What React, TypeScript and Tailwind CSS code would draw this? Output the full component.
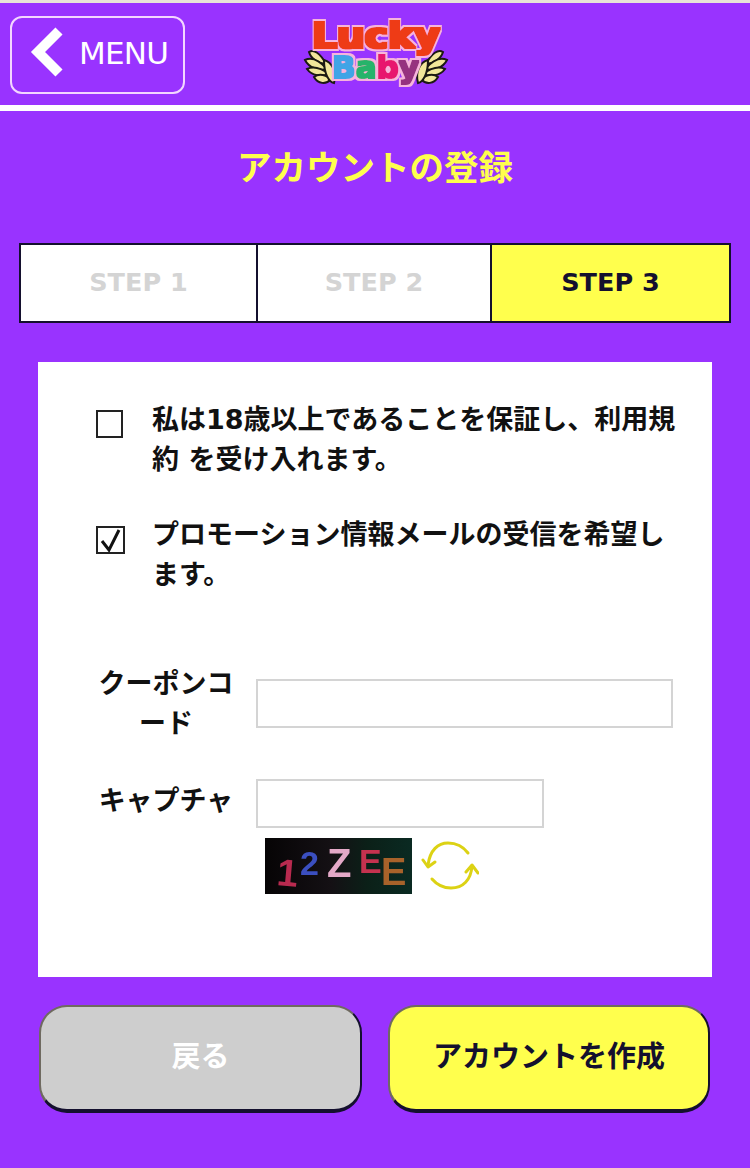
import React from 'react'

const jp = "font-['DejaVu_Sans','Noto_Sans_CJK_JP',sans-serif]"

const steps = [
  { label: 'STEP 1', active: false },
  { label: 'STEP 2', active: false },
  { label: 'STEP 3', active: true },
]

function Wing({ x, flip }: { x: number; flip?: boolean }) {
  return (
    <g transform={flip ? `translate(${x + 34} 34) scale(-1 1)` : `translate(${x} 34)`} fill="#f2e79a" stroke="#1c1a12" strokeWidth="2">
      <path d="M5 2 C10 -1 16 3 22 14 C15 14 7 9 5 2 Z" />
      <path d="M1 10 C7 7 15 10 23 19 C15 21 5 18 1 10 Z" />
      <path d="M3 19 C9 16 17 18 25 24 C17 27 8 26 3 19 Z" />
      <path d="M10 27 C14 24 20 24 27 29 C22 35 14 34 10 27 Z" />
      <path d="M20 10 C28 12 33 22 30 33 C25 32 20 24 20 10 Z" />
    </g>
  )
}

function Logo() {
  return (
    <svg width="146" height="74" viewBox="0 0 146 74">
      <defs>
        <filter id="fat" x="-10%" y="-20%" width="120%" height="140%">
          <feMorphology in="SourceGraphic" operator="dilate" radius="1.4" result="body" />
          <feMorphology in="SourceAlpha" operator="dilate" radius="2.6" result="edge" />
          <feFlood floodColor="#f7b4dc" />
          <feComposite in2="edge" operator="in" result="halo" />
          <feMerge>
            <feMergeNode in="halo" />
            <feMergeNode in="body" />
          </feMerge>
        </filter>
      </defs>
      <Wing x={1} />
      <Wing x={111} flip />
      <g fontFamily="'DejaVu Sans', sans-serif" fontWeight="700">
        <text transform="translate(9 32) scale(1.12 1)" fontSize="35" fill="#ee3a12" filter="url(#fat)">Lucky</text>
        <text x="29" y="62" fontSize="31" filter="url(#fat)">
          <tspan fill="#3fa4e6">B</tspan>
          <tspan fill="#27b36a">a</tspan>
          <tspan fill="#e8186e">b</tspan>
          <tspan fill="#96307f">y</tspan>
        </text>
      </g>
    </svg>
  )
}

function Captcha() {
  return (
    <svg width="147" height="56" viewBox="0 0 147 56">
      <defs>
        <linearGradient id="capbg" x1="0" x2="1" y1="0" y2="0">
          <stop offset="0" stopColor="#060405" />
          <stop offset="0.45" stopColor="#141014" />
          <stop offset="0.7" stopColor="#0b2018" />
          <stop offset="1" stopColor="#0a2a22" />
        </linearGradient>
        <filter id="soft">
          <feGaussianBlur stdDeviation="0.6" />
        </filter>
      </defs>
      <rect width="147" height="56" fill="url(#capbg)" />
      <g fontFamily="'Liberation Sans', sans-serif" filter="url(#soft)">
        <text x="11" y="47" fontSize="38" fill="#b92a50" transform="rotate(5 11 47)">1</text>
        <text x="35" y="37" fontSize="34" fill="#3a4fc0">2</text>
        <text x="62" y="39" fontSize="40" fill="#e4a9c8">Z</text>
        <text x="94" y="35" fontSize="34" fill="#c53350">E</text>
        <text x="116" y="47" fontSize="38" fill="#a8622c">E</text>
      </g>
    </svg>
  )
}

function RefreshIcon() {
  return (
    <svg width="58" height="50" viewBox="0 0 58 50" fill="none" stroke="#dcd214" strokeWidth="3" strokeLinecap="round" strokeLinejoin="round">
      <path d="M47 12 C41 4 34 2 27 2 C17 2 9 9 7 24" />
      <path d="M2 19 L7 26 L14 21" />
      <path d="M11 38 C17 45 23 47 30 47 C42 47 50 39 51 25" />
      <path d="M45 31 L51 24 L57 32" />
    </svg>
  )
}

export default function App() {
  return (
    <div className={`${jp} w-[750px] h-[1168px] bg-[#9933ff] border-t-[3px] border-[#e8e4d8] overflow-hidden`}>
      <header className="h-[102px] flex items-start relative">
        <button className="mt-[13px] ml-[10px] w-[175px] h-[78px] border-2 border-[#f3d6ff] rounded-[12px] flex items-center pl-[17px] gap-[16px] text-white">
          <svg width="34" height="50" viewBox="0 0 34 50" fill="none" stroke="white" strokeWidth="10" strokeLinejoin="miter" className="-mt-[6px]">
            <path d="M30 4 L9 25 L30 46" />
          </svg>
          <span className="text-[31px] font-normal tracking-[-0.75px] leading-none -mt-[4px]">MENU</span>
        </button>
        <div className="absolute left-[303px] top-[13px]">
          <Logo />
        </div>
      </header>
      <div className="h-[6px] bg-white"></div>

      <h1 className="mt-[33px] text-center text-[34.5px] leading-[48px] font-bold text-[#ffff4d]">アカウントの登録</h1>

      <div className="mt-[51px] mx-[19px] h-[80px] border-2 border-[#14102e] grid grid-cols-[235px_234px_1fr] bg-white">
        {steps.map((step, index) => (
          <div
            key={step.label}
            className={`flex items-center justify-center pb-[2px] text-[25.5px] font-bold ${index > 0 ? 'border-l-2 border-[#14102e]' : ''} ${step.active ? 'bg-[#ffff4d] text-[#14102e]' : 'text-[#d4d4d4]'}`}
          >
            {step.label}
          </div>
        ))}
      </div>

      <main className="mt-[39px] mx-[38px] h-[615px] bg-white pt-[38px] text-[#111] font-bold">
        <div className="flex pl-[58px] pr-[36px]">
          <span className="mt-[10px] w-[27px] h-[28px] border-2 border-[#222] shrink-0"></span>
          <p className="ml-[29px] text-[27px] leading-[40px]">私は18歳以上であることを保証し、利用規約 を受け入れます。</p>
        </div>
        <div className="flex pl-[58px] pr-[36px] mt-[35px]">
          <span className="mt-[11px] w-[29px] h-[28px] border-2 border-[#222] shrink-0 flex items-center justify-center">
            <svg width="24" height="24" viewBox="0 0 24 24" fill="none" stroke="#111" strokeWidth="3">
              <path d="M3 13 L10 22 L20 2" />
            </svg>
          </span>
          <p className="ml-[27px] text-[27px] leading-[40px]">プロモーション情報メールの受信を希望します。</p>
        </div>

        <div className="flex items-start mt-[69px] pl-[58px]">
          <label className="w-[140px] text-center text-[27px] leading-[40px]">クーポンコード</label>
          <input className="ml-[20px] mt-[15px] w-[417px] h-[49px] border-2 border-[#d4d4d4] bg-white outline-none" />
        </div>
        <div className="flex items-start mt-[35px] pl-[58px]">
          <label className="mt-[2px] w-[140px] text-center text-[27px] leading-[40px] whitespace-nowrap">キャプチャ</label>
          <div className="ml-[20px]">
            <input className="block w-[288px] h-[49px] border-2 border-[#d4d4d4] bg-white outline-none" />
            <div className="flex items-center mt-[10px] ml-[9px] gap-[9px]">
              <Captcha />
              <RefreshIcon />
            </div>
          </div>
        </div>
      </main>

      <div className="mt-[28px] ml-[39px] mr-[40px] flex justify-between">
        <button className="w-[323px] h-[108px] rounded-[28px] bg-[#cecece] border-2 border-t-[#6f6a60] border-l-[#6f6a60] border-r-[#14102e] border-b-[#14102e] border-b-[4px] text-white text-[29px] font-bold">戻る</button>
        <button className="w-[322px] h-[108px] rounded-[28px] bg-[#ffff4d] border-2 border-t-[#6f6a60] border-l-[#6f6a60] border-r-[#14102e] border-b-[#14102e] border-b-[4px] text-[#14102e] text-[29px] font-bold">アカウントを作成</button>
      </div>
    </div>
  )
}
